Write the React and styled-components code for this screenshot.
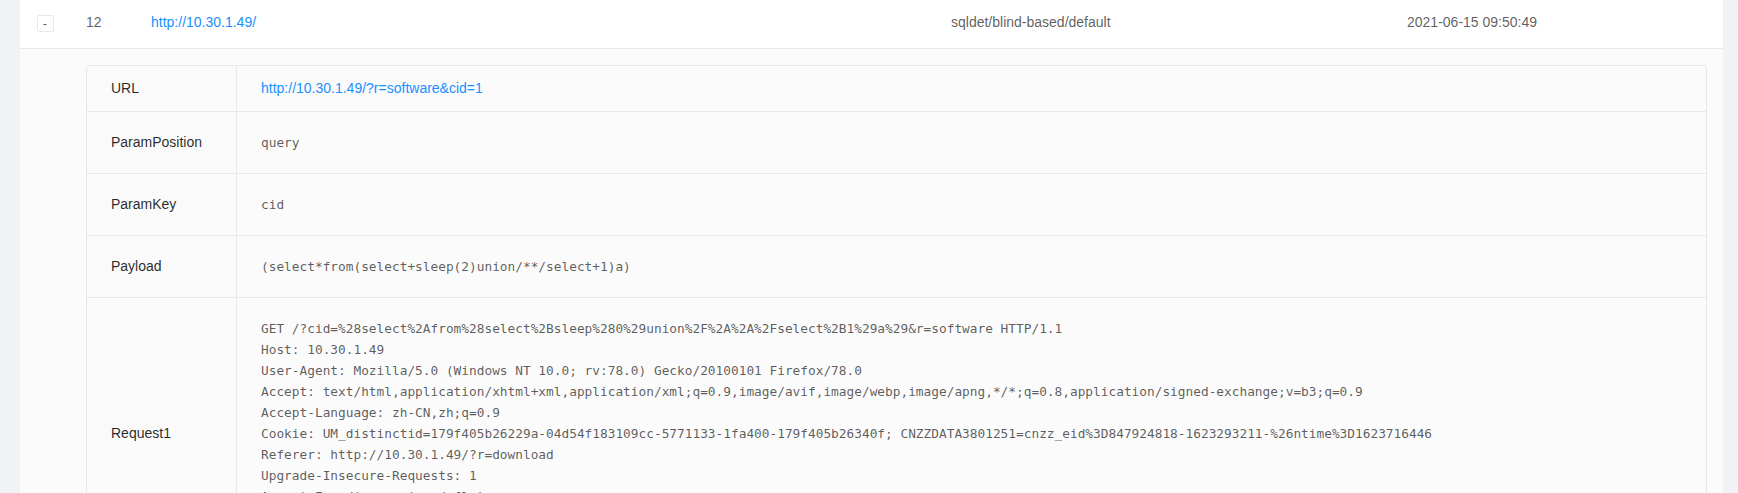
import React from "react";
import styled, { createGlobalStyle } from "styled-components";

const GlobalStyle = createGlobalStyle`
  * { box-sizing: border-box; }
  html, body {
    margin: 0;
    padding: 0;
    overflow: hidden;
    background: #f0f2f5;
  }
  body {
    font-family: "Liberation Sans", Arial, sans-serif;
    font-size: 14px;
    color: rgba(0, 0, 0, 0.65);
  }
`;

const Page = styled.div`
  height: 100vh;
  overflow: hidden;
  padding: 0 15px 0 20px;
`;

const Card = styled.div`
  background: #fff;
`;

const HeaderRow = styled.div`
  display: grid;
  grid-template-columns: 50px 65px 800px 456px 1fr;
  border-bottom: 1px solid #e8e8e8;
`;

const Cell = styled.div`
  padding: 12px 16px 15px;
  line-height: 21px;
  white-space: nowrap;
  display: flex;
  align-items: center;
  justify-content: ${({ center }) => (center ? "center" : "flex-start")};
`;

const ExpandButton = styled.button`
  width: 17px;
  height: 17px;
  padding: 0;
  margin-top: 1px;
  border: 1px solid #e8e8e8;
  border-radius: 2px;
  background: #fff;
  color: rgba(0, 0, 0, 0.65);
  font-family: "Liberation Sans", Arial, sans-serif;
  font-size: 13px;
  line-height: 13px;
  cursor: pointer;
`;

const Link = styled.a`
  color: #1890ff;
  text-decoration: none;
  cursor: pointer;
`;

const Expanded = styled.div`
  background: #fbfbfb;
  padding: 16px 16px 16px 66px;
  border-bottom: 1px solid #e8e8e8;
`;

const Descriptions = styled.div`
  border: 1px solid #e8e8e8;
  border-radius: 4px;
  overflow: hidden;
`;

const DescRow = styled.div`
  display: grid;
  grid-template-columns: 150px 1fr;
  border-bottom: 1px solid #e8e8e8;
  &:last-child {
    border-bottom: none;
  }
`;

const Label = styled.div`
  background: #fafafa;
  border-right: 1px solid #e8e8e8;
  padding: 12px 24px;
  line-height: 21px;
  color: rgba(0, 0, 0, 0.85);
  display: flex;
  align-items: center;
`;

const Value = styled.div`
  padding: 12px 24px;
  line-height: 21px;
  min-width: 0;
  display: flex;
  align-items: center;
`;

const Code = styled.pre`
  margin: 8px 0;
  font-family: "DejaVu Sans Mono", "Liberation Mono", monospace;
  font-size: 12.8px;
  line-height: 21px;
  color: rgba(0, 0, 0, 0.65);
  white-space: pre;
`;

const record = {
  id: 12,
  target: "http://10.30.1.49/",
  plugin: "sqldet/blind-based/default",
  time: "2021-06-15 09:50:49",
  url: "http://10.30.1.49/?r=software&cid=1",
  paramPosition: "query",
  paramKey: "cid",
  payload: "(select*from(select+sleep(2)union/**/select+1)a)",
  request1: [
    "GET /?cid=%28select%2Afrom%28select%2Bsleep%280%29union%2F%2A%2A%2Fselect%2B1%29a%29&r=software HTTP/1.1",
    "Host: 10.30.1.49",
    "User-Agent: Mozilla/5.0 (Windows NT 10.0; rv:78.0) Gecko/20100101 Firefox/78.0",
    "Accept: text/html,application/xhtml+xml,application/xml;q=0.9,image/avif,image/webp,image/apng,*/*;q=0.8,application/signed-exchange;v=b3;q=0.9",
    "Accept-Language: zh-CN,zh;q=0.9",
    "Cookie: UM_distinctid=179f405b26229a-04d54f183109cc-5771133-1fa400-179f405b26340f; CNZZDATA3801251=cnzz_eid%3D847924818-1623293211-%26ntime%3D1623716446",
    "Referer: http://10.30.1.49/?r=download",
    "Upgrade-Insecure-Requests: 1",
    "Accept-Encoding: gzip, deflate",
    "Connection: close",
    " ",
  ].join("\n"),
};

const App = () => {
  const rows = [
    { label: "URL", value: <Link>{record.url}</Link> },
    { label: "ParamPosition", value: <Code>{record.paramPosition}</Code> },
    { label: "ParamKey", value: <Code>{record.paramKey}</Code> },
    { label: "Payload", value: <Code>{record.payload}</Code> },
    { label: "Request1", value: <Code>{record.request1}</Code> },
  ];

  return (
    <>
      <GlobalStyle />
      <Page>
        <Card>
          <HeaderRow>
            <Cell center>
              <ExpandButton>-</ExpandButton>
            </Cell>
            <Cell>{record.id}</Cell>
            <Cell>
              <Link>{record.target}</Link>
            </Cell>
            <Cell>{record.plugin}</Cell>
            <Cell>{record.time}</Cell>
          </HeaderRow>
          <Expanded>
            <Descriptions>
              {rows.map((row) => (
                <DescRow key={row.label}>
                  <Label>{row.label}</Label>
                  <Value>{row.value}</Value>
                </DescRow>
              ))}
            </Descriptions>
          </Expanded>
        </Card>
      </Page>
    </>
  );
};

export default App;
